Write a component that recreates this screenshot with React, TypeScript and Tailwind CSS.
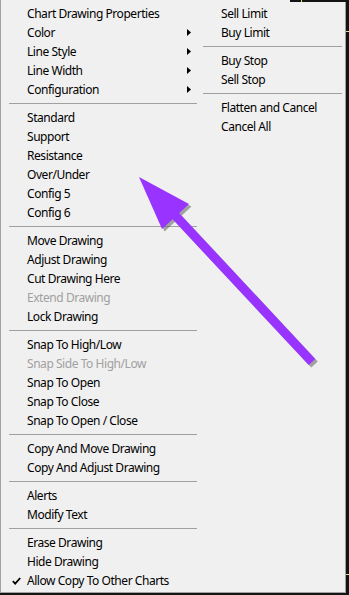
import React from "react";

type Item =
  | { sep: true }
  | { label: string; sub?: boolean; disabled?: boolean; checked?: boolean };

const leftItems: Item[] = [
  { label: "Chart Drawing Properties" },
  { label: "Color", sub: true },
  { label: "Line Style", sub: true },
  { label: "Line Width", sub: true },
  { label: "Configuration", sub: true },
  { sep: true },
  { label: "Standard" },
  { label: "Support" },
  { label: "Resistance" },
  { label: "Over/Under" },
  { label: "Config 5" },
  { label: "Config 6" },
  { sep: true },
  { label: "Move Drawing" },
  { label: "Adjust Drawing" },
  { label: "Cut Drawing Here" },
  { label: "Extend Drawing", disabled: true },
  { label: "Lock Drawing" },
  { sep: true },
  { label: "Snap To High/Low" },
  { label: "Snap Side To High/Low", disabled: true },
  { label: "Snap To Open" },
  { label: "Snap To Close" },
  { label: "Snap To Open / Close" },
  { sep: true },
  { label: "Copy And Move Drawing" },
  { label: "Copy And Adjust Drawing" },
  { sep: true },
  { label: "Alerts" },
  { label: "Modify Text" },
  { sep: true },
  { label: "Erase Drawing" },
  { label: "Hide Drawing" },
  { label: "Allow Copy To Other Charts", checked: true },
];

const rightItems: Item[] = [
  { label: "Sell Limit" },
  { label: "Buy Limit" },
  { sep: true },
  { label: "Buy Stop" },
  { label: "Sell Stop" },
  { sep: true },
  { label: "Flatten and Cancel" },
  { label: "Cancel All" },
];

const SubArrow = () => (
  <svg width="4" height="7" viewBox="0 0 4 7" className="ml-auto mr-[9px]">
    <path d="M0 0 L4 3.5 L0 7 Z" fill="#000" />
  </svg>
);

const Check = () => (
  <svg width="9" height="8" viewBox="0 0 9 8" className="absolute left-[11px] top-[6px]">
    <path d="M0.8 4.2 L3.2 6.6 L8.2 1" stroke="#000" strokeWidth="1.8" fill="none" />
  </svg>
);

const LeftMenu = () => (
  <div className="flex w-[199px] flex-col pt-[4px]">
    {leftItems.map((it, i) =>
      "sep" in it ? (
        <div key={i} className="flex h-[9px] items-center">
          <div className="ml-[8px] h-px w-[188px] bg-[#a0a0a0]" />
        </div>
      ) : (
        <div key={i} className="relative flex h-[19px] items-center pl-[26px]">
          {it.checked && <Check />}
          <span className={it.disabled ? "text-[#a0a0a0]" : "text-black"}>{it.label}</span>
          {it.sub && <SubArrow />}
        </div>
      )
    )}
  </div>
);

const RightMenu = () => (
  <div className="flex w-[145px] flex-col pt-[4px]">
    {rightItems.map((it, i) =>
      "sep" in it ? (
        <div key={i} className="flex h-[9px] items-center">
          <div className="ml-[3px] h-px w-[139px] bg-[#a0a0a0]" />
        </div>
      ) : (
        <div key={i} className="flex h-[19px] items-center pl-[21px] text-black">
          {it.label}
        </div>
      )
    )}
  </div>
);

const PurpleArrow = () => (
  <svg width="349" height="595" className="pointer-events-none absolute left-0 top-0">
    <g transform="translate(2.5 2.5)" opacity="0.5">
      <line x1="172" y1="212" x2="312" y2="362" stroke="#555" strokeWidth="9" />
      <path d="M139 177 L189 204 L162 229 Z" fill="#555" />
    </g>
    <line x1="172" y1="212" x2="312" y2="362" stroke="#9933ff" strokeWidth="9" />
    <path d="M139 177 L189 204 L162 229 Z" fill="#9933ff" />
  </svg>
);

export default function App() {
  return (
    <div
      className="relative h-[595px] w-[349px] overflow-hidden bg-[#141414] text-[12px] leading-none tracking-[-0.45px]"
      style={{ fontFamily: '"Noto Sans", "Open Sans", sans-serif' }}
    >
      <div className="flex h-[593px] w-[346px] border-x border-b border-[#a0a0a0] bg-[#f0f0f0]">
        <LeftMenu />
        <RightMenu />
      </div>
      <div className="absolute right-0 top-0 h-[2px] w-[59px] bg-[#141414]" />
      <div className="absolute left-[301px] top-0 h-[2px] w-px bg-[#e8e050]" />
      <div className="absolute right-0 top-[31px] h-px w-[3px] bg-[#e8e0a0]" />
      <div className="absolute right-0 top-[574px] h-px w-[3px] bg-[#e8e0a0]" />
      <PurpleArrow />
    </div>
  );
}
